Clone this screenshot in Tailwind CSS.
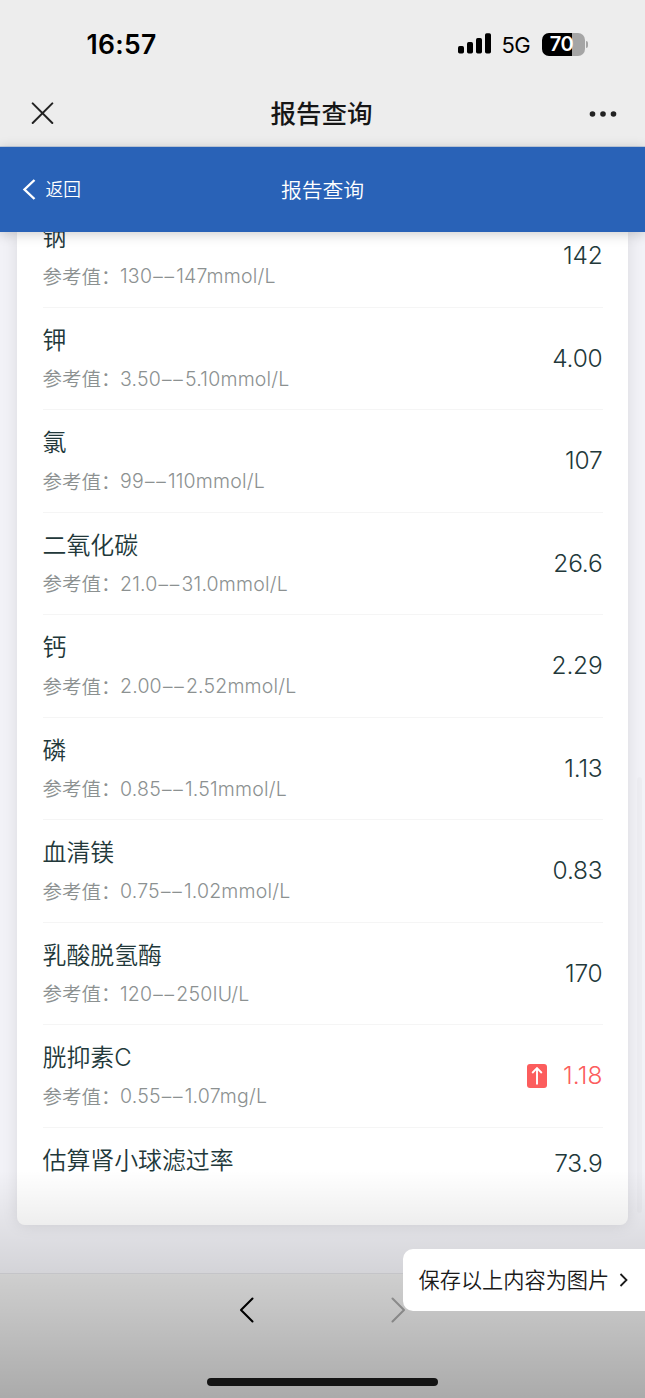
<!DOCTYPE html>
<html lang="zh-CN">
<head>
<meta charset="utf-8">
<title>报告查询</title>
<script src="https://cdn.jsdelivr.net/npm/@tailwindcss/browser@4"></script>
</head>
<body class="relative flex h-[1398px] w-[645px] flex-col overflow-hidden bg-[#f2f2f7] font-['Inter','Noto_Sans_CJK_SC',sans-serif] font-[350] text-[#22383a]">
  <header class="h-[147px] shrink-0 border-b border-[#c3cfe0] bg-[#ededed] text-[#161616]">
    <div class="flex h-[80px] items-center justify-between pt-[8px] pr-[57px] pl-[86.5px] text-black">
      <div class="text-[26.5px] leading-none font-semibold tracking-[0.3px]">16:57</div>
      <div class="flex items-center">
        <svg class="h-[22px] w-[34px]" viewBox="0 0 34 22"><rect x="0" y="13" width="6" height="7.5" rx="1.7"/><rect x="9" y="9" width="6" height="11.5" rx="1.7"/><rect x="18" y="5" width="6" height="15.5" rx="1.7"/><rect x="27" y="0.2" width="6" height="20.3" rx="1.7"/></svg>
        <div class="ml-[10px] w-[31px] pt-[1px] text-[22px] leading-none font-normal tracking-[-0.6px]">5G</div>
        <div class="ml-[9px] flex h-[23px] w-[43px] items-center justify-center rounded-[7px] bg-[linear-gradient(90deg,#000_70%,#a5a5a5_70%)] pr-[3px] text-[20px] leading-none font-semibold tracking-[-0.5px] text-white">70</div>
        <div class="ml-[1px] h-[7px] w-[2.5px] rounded-r-full bg-[#a5a5a5]"></div>
      </div>
    </div>
    <div class="grid h-[67px] grid-cols-[60px_1fr_60px] items-center pr-[28px] pl-[29px]">
      <svg class="ml-[2px] size-[23px]" viewBox="0 0 23 23" fill="none" stroke="#222" stroke-width="2" stroke-linecap="round"><path d="M1.7 1.4 21.3 21M21.3 1.4 1.7 21"/></svg>
      <h1 class="pt-[1px] pr-[3px] text-center text-[25.5px] leading-none font-medium whitespace-nowrap">报告查询</h1>
      <svg class="h-[8px] w-[28px] justify-self-end" viewBox="0 0 28 8" fill="#222"><circle cx="3.5" cy="4" r="2.8"/><circle cx="14" cy="4" r="2.8"/><circle cx="24.5" cy="4" r="2.8"/></svg>
    </div>
  </header>
  <nav class="z-10 grid h-[85px] shrink-0 grid-cols-3 items-center bg-[#2962b7] px-[22px] text-white shadow-[0_2px_12px_rgba(0,0,0,0.2)]">
    <div class="flex items-center gap-[9.5px] text-[17.7px] leading-none"><svg class="h-[22px] w-[14px]" viewBox="0 0 14 22" fill="none" stroke="white" stroke-width="2.4"><path d="M12.5 1 2.5 10.5l10 9.5"/></svg>返回</div>
    <div class="pt-[3px] text-center text-[20.8px] leading-none whitespace-nowrap">报告查询</div>
  </nav>
  <main class="h-[1041px] shrink-0 px-[17px]">
    <div class="h-[993px] overflow-hidden rounded-b-[8px] bg-white px-[25.5px] shadow-[0_0_16px_rgba(0,0,0,0.10)]">
      <div id="results" class="-mt-[27px]"></div>
    </div>
  </main>
  <footer class="h-[125px] shrink-0 border-t border-[#e0e0e5] bg-[#ededed]">
    <div class="flex justify-center gap-[136px] pt-[23px]">
      <svg class="h-[26px] w-[16px]" viewBox="0 0 16 26" fill="none" stroke="#000" stroke-width="2.1" stroke-linecap="round" stroke-linejoin="round"><path d="M13.5 1.5 2 13l11.5 11.5"/></svg>
      <svg class="h-[26px] w-[16px]" viewBox="0 0 16 26" fill="none" stroke="#a5a5a5" stroke-width="2.1" stroke-linecap="round" stroke-linejoin="round"><path d="m1.5 1.5 11.5 11.5L1.5 24.5"/></svg>
    </div>
    <div class="mx-auto mt-[55px] h-[8px] w-[231px] rounded-full bg-[#1b1b1b]"></div>
  </footer>
  <div class="absolute top-[777px] right-[3px] h-[436px] w-[5px] rounded-full bg-black/2"></div>
  <div class="absolute inset-x-0 bottom-0 z-20 h-[228px] bg-linear-to-b from-black/0 to-black/28"></div>
  <div class="absolute top-[1249px] right-0 z-30 flex h-[62px] w-[242px] items-center rounded-l-[10px] bg-white pl-[15.5px] text-[21.2px] leading-none text-[#1a1a1a]"><span class="pt-[1px] whitespace-nowrap">保存以上内容为图片</span><svg class="ml-[10px] h-[14px] w-[9px]" viewBox="0 0 9 14" fill="none" stroke="#1a1a1a" stroke-width="1.8"><path d="m1.5 1 6 6-6 6"/></svg></div>
<script>
const rows = [
  ["钠", "130––147mmol/L", "142"],
  ["钾", "3.50––5.10mmol/L", "4.00"],
  ["氯", "99––110mmol/L", "107"],
  ["二氧化碳", "21.0––31.0mmol/L", "26.6"],
  ["钙", "2.00––2.52mmol/L", "2.29"],
  ["磷", "0.85––1.51mmol/L", "1.13"],
  ["血清镁", "0.75––1.02mmol/L", "0.83"],
  ["乳酸脱氢酶", "120––250IU/L", "170"],
  ["胱抑素C", "0.55––1.07mg/L", "1.18", true],
  ["估算肾小球滤过率", "", "73.9"],
];
const arrow = '<svg class="mt-[1px] mr-[16px] h-[24px] w-[20px]" viewBox="0 0 20 24"><rect width="20" height="24" rx="3" fill="#fc5d5d"/><path d="M10 20.5V4.7M5.2 9 10 4.2 14.8 9" fill="none" stroke="white" stroke-width="1.9"/></svg>';
const dashes = '<span class="inline-block w-[24px] pl-[1px] text-[19px] tracking-[1.8px]">––</span>';
document.getElementById("results").innerHTML = rows.map(([name, ref, value, high], i) => `
  <div class="flex h-[102.5px] justify-between ${i < rows.length - 1 ? "border-b border-[#f5f5f5]" : ""}">
    <div class="pt-[21px]">
      <div class="h-[24px] text-[23.9px] leading-[24px] whitespace-nowrap">${name}</div>
      ${ref ? `<div class="mt-[16px] flex h-[20px] text-[19.5px] leading-[20px] whitespace-nowrap text-[#8c9191]"><span class="w-[77.5px] pt-[0.5px]">参考值：</span><span class="tracking-[0.2px]">${ref.replace("––", dashes)}</span></div>` : ""}
    </div>
    <div class="flex items-center self-start text-[24.5px] leading-[30px] ${high ? "tracking-[0.1px]" : "tracking-[-0.2px]"} ${ref ? "pt-[35px]" : "pt-[20px]"} ${high ? "text-[#fc5d5d]" : ""}">${high ? arrow : ""}${value}</div>
  </div>`).join("");
</script>
</body>
</html>
